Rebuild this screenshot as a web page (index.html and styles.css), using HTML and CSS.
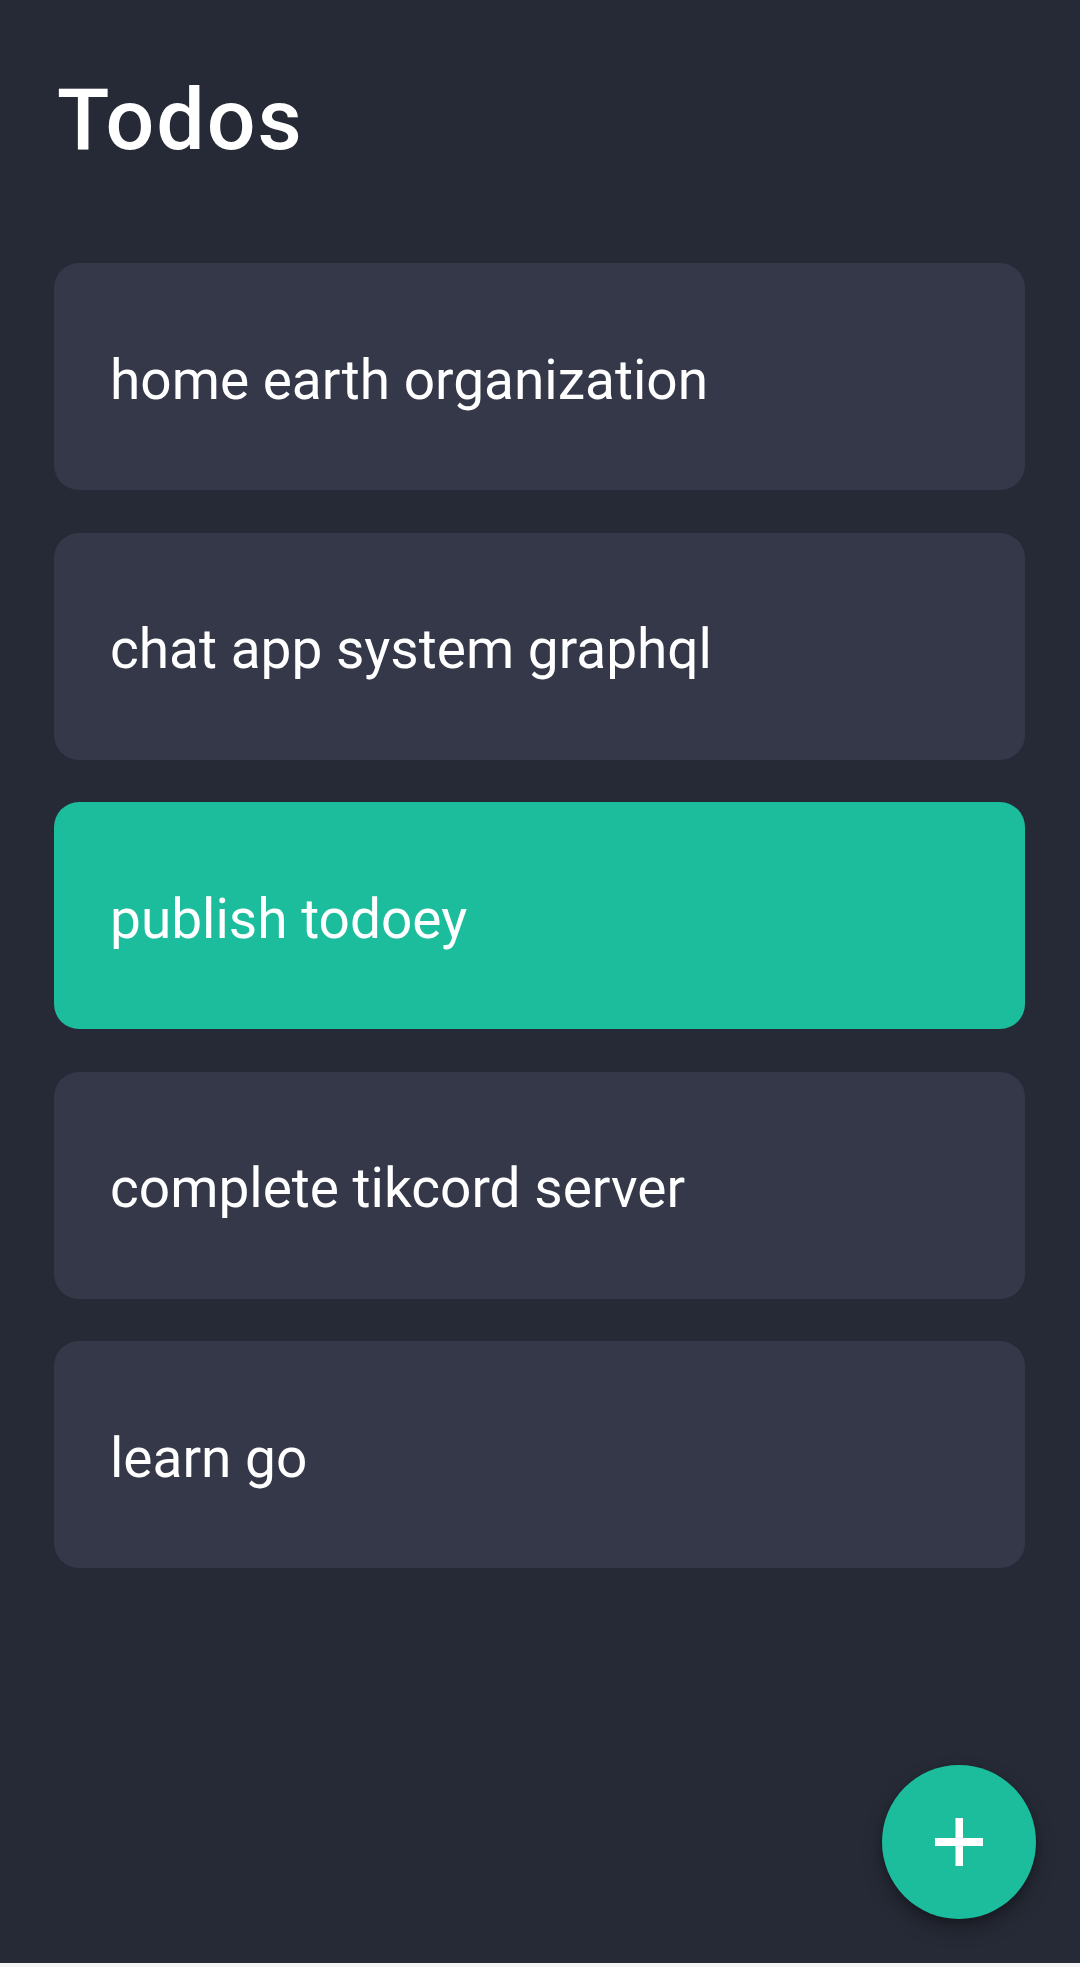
FILE: index.html
```html
<!DOCTYPE html>
<html lang="en">
<head>
<meta charset="utf-8">
<title>Todos</title>
<link rel="stylesheet" href="styles.css">
</head>
<body>
<div class="screen">
  <h1 class="title">Todos</h1>
  <ul class="todo-list">
    <li class="todo">home earth organization</li>
    <li class="todo">chat app system graphql</li>
    <li class="todo todo--active">publish todoey</li>
    <li class="todo">complete tikcord server</li>
    <li class="todo">learn go</li>
  </ul>
  <button class="fab" aria-label="Add todo">
    <svg width="48" height="48" viewBox="0 0 48 48" aria-hidden="true">
      <rect x="0" y="20" width="48" height="8" fill="#fff"/>
      <rect x="20.5" y="0" width="7.5" height="48" fill="#fff"/>
    </svg>
  </button>
</div>
<div class="nav-edge"></div>
</body>
</html>
```
FILE: styles.css
```css
html, body {
  margin: 0;
  padding: 0;
  background: #ffffff;
}
body {
  width: 1080px;
  height: 1967px;
  overflow: hidden;
  font-family: Roboto, "Noto Sans", "Liberation Sans", sans-serif;
}
.screen {
  position: relative;
  height: 1963px;
  background: #262a36;
  padding: 0 55px 0 54px;
  box-sizing: border-box;
  overflow: hidden;
}
.title {
  margin: 0;
  padding: 69px 0 0 3px;
  font-size: 86px;
  font-weight: 500;
  letter-spacing: 2px;
  line-height: normal;
  color: #ffffff;
}
.todo-list {
  list-style: none;
  margin: 93px 0 0 0;
  padding: 0;
  display: flex;
  flex-direction: column;
  gap: 42.5px;
}
.todo {
  height: 227px;
  box-sizing: border-box;
  padding: 6px 0 0 56px;
  display: flex;
  align-items: center;
  background: #343849;
  border-radius: 25px;
  color: #ffffff;
  font-size: 55px;
  font-weight: 400;
}
.todo--active {
  background: #1cbd9c;
}
.fab {
  position: absolute;
  right: 44px;
  bottom: 44px;
  width: 154px;
  height: 154px;
  border: none;
  border-radius: 50%;
  background: #1cbd9c;
  display: flex;
  align-items: center;
  justify-content: center;
  padding: 0;
  box-shadow: 0 10px 20px rgba(0, 0, 0, 0.28), 0 3px 6px rgba(0, 0, 0, 0.2);
}
.nav-edge {
  height: 4px;
  background: #f4f4f6;
}
```
